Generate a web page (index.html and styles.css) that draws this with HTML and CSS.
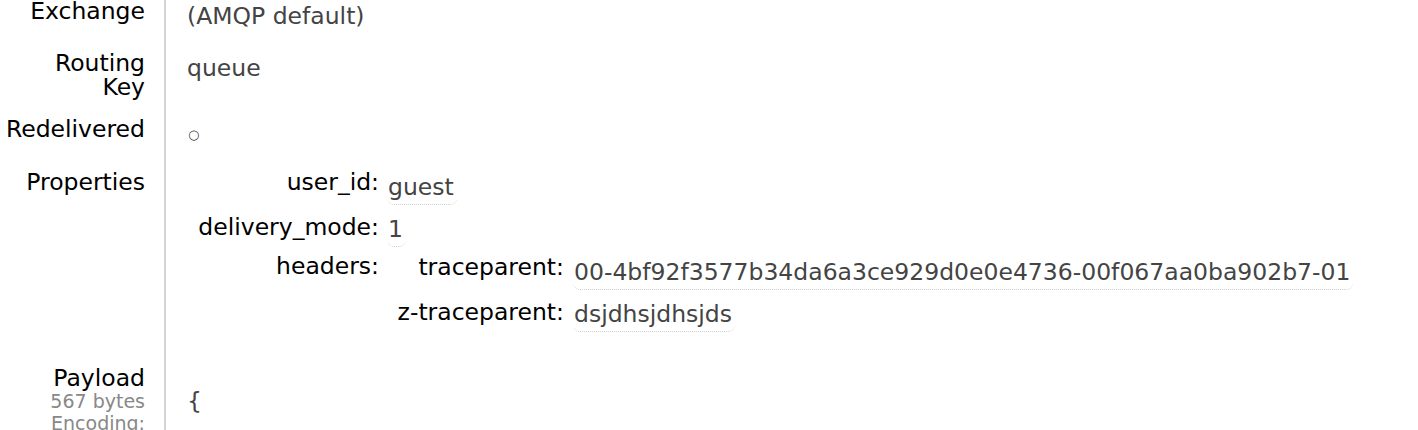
FILE: index.html
```html
<!DOCTYPE html>
<html lang="en">
<head>
<meta charset="utf-8">
<title>Message</title>
<link rel="stylesheet" href="styles.css">
</head>
<body>
<div class="facts">
  <div class="row">
    <div class="label">Exchange</div>
    <div class="value">(AMQP default)</div>
  </div>
  <div class="row">
    <div class="label">Routing<br>Key</div>
    <div class="value">queue</div>
  </div>
  <div class="row">
    <div class="label">Redelivered</div>
    <div class="value"><span class="bool">○</span></div>
  </div>
  <div class="row">
    <div class="label">Properties</div>
    <div class="value props">
      <div class="mini">
        <div class="key">user_id:</div>
        <div class="val"><span class="typed">guest</span></div>
        <div class="key">delivery_mode:</div>
        <div class="val"><span class="typed">1</span></div>
        <div class="key">headers:</div>
        <div class="val">
          <div class="mini headers">
            <div class="key">traceparent:</div>
            <div class="val"><span class="typed">00-4bf92f3577b34da6a3ce929d0e0e4736-00f067aa0ba902b7-01</span></div>
            <div class="key">z-traceparent:</div>
            <div class="val"><span class="typed">dsjdhsjdhsjds</span></div>
          </div>
        </div>
      </div>
    </div>
  </div>
  <div class="row">
    <div class="label">Payload<span class="sub">567 bytes</span><span class="sub">Encoding: string</span></div>
    <div class="value payload"><pre class="msg">{</pre></div>
  </div>
</div>
</body>
</html>
```
FILE: styles.css
```css
html, body {
  margin: 0;
  padding: 0;
  background: #fff;
}
body {
  font-family: "DejaVu Sans", Verdana, sans-serif;
  font-size: 23.5px;
  color: #000;
  overflow: hidden;
}
.facts {
  margin-top: -1px;
}
.row {
  display: flex;
  align-items: stretch;
}
.label {
  flex: 0 0 145px;
  width: 145px;
  min-width: 0;
  padding-right: 19px;
  padding-bottom: 18px;
  border-right: 2px solid #d4d4d4;
  text-align: right;
  line-height: 24px;
  color: #000;
}
.label .sub {
  display: block;
  font-size: 19px;
  line-height: 22px;
  color: #888;
}
.value {
  flex: 1 1 auto;
  min-width: 0;
  padding-left: 21px;
  padding-bottom: 18px;
  line-height: 34px;
  color: #444;
}
.bool {
  font-size: 13px;
  display: inline-block;
  vertical-align: 3px;
  padding-left: 1px;
}
.props {
  padding-bottom: 34px;
}
.mini {
  display: grid;
  grid-template-columns: 192px auto;
  column-gap: 8px;
  row-gap: 7px;
  align-items: start;
  justify-content: start;
}
.mini.headers {
  grid-template-columns: 177px auto;
  column-gap: 9px;
  padding-top: 1px;
}
.key {
  text-align: right;
  line-height: 24.5px;
  color: #000;
  white-space: nowrap;
}
.mini > .key:nth-of-type(3) {
  padding-top: 3px;
}
.val {
  line-height: 34px;
  color: #444;
  white-space: nowrap;
}
.typed {
  display: inline-block;
  padding: 0 3px 0 1px;
  border-bottom: 1px dotted #cfcfcf;
  border-radius: 0 0 7px 7px;
}
.payload {
  padding-top: 18px;
}
.msg {
  margin: 0;
  font-family: inherit;
  font-size: inherit;
  line-height: 34px;
  color: #444;
}
```
